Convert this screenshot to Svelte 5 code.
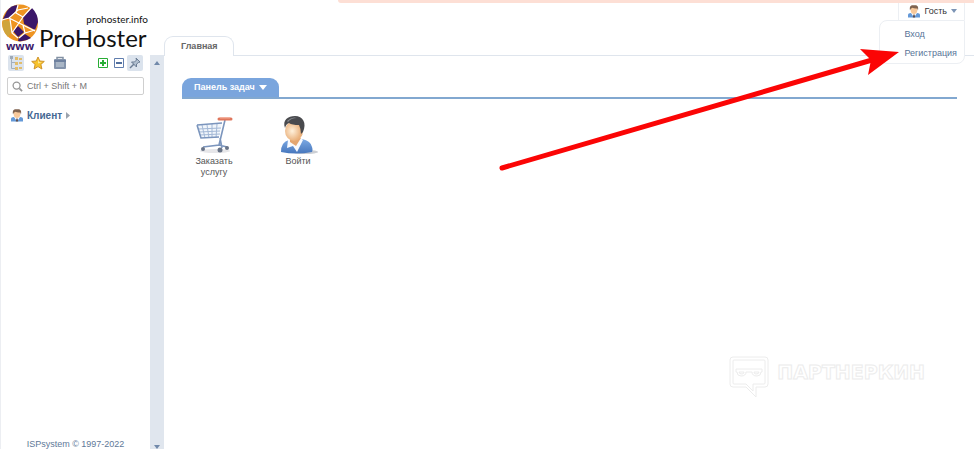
<script lang="ts">
let search = "";

const userLinks = ["Вход", "Регистрация"];
</script>

{#snippet person()}
  <svg class="person" viewBox="0 0 12 13" aria-hidden="true">
    <path d="M0 12.500V10q0-2 3-2h6q3 0 3 2v2.500z" fill="#6499d8" />
    <path d="M3 8 6 12.500 9 8z" fill="#fff" />
    <path d="M5.400 9.500h1.200l.6 3H4.800z" fill="#5b4a4a" />
    <ellipse cx="6" cy="5" rx="3.300" ry="4" fill="#f8c99b" />
    <path d="M2 5.500C1 0 4 .2 6 .2s5-.2 4 5.300L9.300 3.500Q6 3.800 4.500 2.800L2.800 3.800z" fill="#80634f" />
  </svg>
{/snippet}

<div class="page">
  <aside>
    <a class="logo" href="#home">
      <span class="globe">
        <svg viewBox="0 0 38 38" aria-hidden="true">
          <ellipse cx="19" cy="19" rx="18" ry="18.500" fill="#ee9421" />
          <path d="M6 7Q10 1 17 1L14 8 8 14 2 15z" fill="#3b1769" />
          <path d="M22 13 31 4Q37 10 37 18L34 26 23 20z" fill="#3b1769" />
          <path d="M18 33 24 30 30 34Q24 38 17 37z" fill="#3b1769" />
          <path d="M2 16 9 17 11 27 7 33Q0 26 2 16z" fill="#cfa43c" />
          <path d="M12 27 17 22 23 28 17 33z" fill="#3b1769" />
          <path d="M1 16 8 14 17 6 27 4M17 1 15 9 22 13 31 3M9 15 11 29 17 34M8 14 22 21 34 27M22 13 11 29M22 21 24 29 18 34M24 29 34 26" fill="none" stroke="#fff" stroke-width="1.200" />
        </svg>
        <b>www</b>
      </span>
      <span class="brand">
        <small>prohoster.info</small>
        <strong>ProHoster</strong>
      </span>
    </a>
    <div class="side-body">
      <div class="side-main">
        <div class="tools">
          <button class="active" aria-label="Меню">
            <svg viewBox="0 0 16 16">
              <path d="M3.500 3v10.500h4M3.500 7.500h4" fill="none" stroke="#a3afbd" />
              <path d="M7 2h3v3H7zM11 3h3v2h-3zM7 7h3v3H7zM11 7h3v2h-3zM7 12h3v3H7zM11 12h3v2h-3z" fill="#e2bd6c" />
              <path d="M2 1h3v3H2z" fill="#9eaab7" />
            </svg>
          </button>
          <button aria-label="Избранное">
            <svg viewBox="0 0 16 16">
              <path d="m8 2 1.800 4 4.500.4-3.400 3 1 4.600L8 11.600 4.100 14l1-4.600-3.400-3L6.200 6z" fill="#f7c32c" stroke="#cf932b" />
              <path d="m8 4 1 3 3 .3-4 1.200z" fill="#ffe994" />
            </svg>
          </button>
          <button class="last" aria-label="Корзина">
            <svg viewBox="0 0 16 16">
              <path d="M5 4.500V2.500h6v2" fill="none" stroke="#8391a3" stroke-width="1.500" />
              <rect x="2" y="4" width="12" height="10" rx="1" fill="#8494ac" />
              <path d="M4 7h8v5H4z" fill="#a9b6c6" />
              <path d="M2 5h12v2H2z" fill="#6e819f" />
            </svg>
          </button>
          <button aria-label="Развернуть">
            <svg viewBox="0 0 16 16">
              <path d="M3.500 3.500h9v9h-9z" fill="#fff" stroke="#28ad35" />
              <path d="M8 5v6M5 8h6" stroke="#28ad35" stroke-width="2" />
            </svg>
          </button>
          <button aria-label="Свернуть">
            <svg viewBox="0 0 16 16">
              <path d="M3.500 3.500h9v9h-9z" fill="#fff" stroke="#617eae" />
              <path d="M5 8h6" stroke="#516f9e" stroke-width="2" />
            </svg>
          </button>
          <button class="active" aria-label="Закрепить">
            <svg viewBox="0 0 16 16">
              <path d="m9 3 4 4-1.500.5L9.500 9v3L4.500 7h3l2-2z" fill="#b2c0d0" stroke="#6b7d94" />
              <path d="m7 9-4 4" stroke="#6b7d94" stroke-width="1.500" />
            </svg>
          </button>
        </div>
        <label class="search">
          <svg viewBox="0 0 12 12" aria-hidden="true">
            <circle cx="5" cy="5" r="3.800" fill="none" stroke="#969696" stroke-width="1.400" />
            <path d="m8 8 3 3" stroke="#969696" stroke-width="1.800" />
          </svg>
          <input type="text" bind:value={search} placeholder="Ctrl + Shift + M" aria-label="Поиск" />
        </label>
        <nav>
          <a href="#client">
            {@render person()}
            Клиент
            <svg class="chevron" viewBox="0 0 4 7" aria-hidden="true"><path d="m0 0 4 3.500L0 7z" fill="#9ba3ae" /></svg>
          </a>
        </nav>
        <footer>ISPsystem © 1997-2022</footer>
      </div>
      <div class="rail">
        <svg viewBox="0 0 6 4" aria-hidden="true"><path d="m0 4 3-4 3 4z" fill="#7189aa" /></svg>
        <svg viewBox="0 0 6 4" aria-hidden="true"><path d="m0 0 3 4 3-4z" fill="#7189aa" /></svg>
      </div>
    </div>
  </aside>

  <main>
    <header>
      <a class="tab" href="#main">Главная</a>
    </header>
    <section>
      <div class="section-head">
        <button>
          Панель задач
          <svg viewBox="0 0 8 5" aria-hidden="true"><path d="M0 0h8L4 5z" fill="#fff" /></svg>
        </button>
      </div>
      <div class="tasks">
        <a href="#order">
          <svg viewBox="0 0 40 40" aria-hidden="true">
            <ellipse cx="21" cy="37" rx="15" ry="2" fill="#e6e6e9" />
            <path d="M3 11 28 9 25 23 8 24z" fill="#f0f5fb" />
            <path d="M4 15l23-1M5 18l21-1M6 21l20-1M8 11l3 13M13 11l2 13M18 10v14M23 10l-1 14" fill="none" stroke="#a3b8d6" />
            <path d="M3 11 7 24 25 23M3 11 28 9M31 6 25 31 9 33M26 24 28 34M25 31l8 2" fill="none" stroke="#7b95bd" stroke-width="1.600" />
            <path d="M25 5h12" stroke="#df765c" stroke-width="3" stroke-linecap="round" />
            <path d="M26 4h10" stroke="#f5a78f" />
            <g fill="#697487"><circle cx="9" cy="35" r="2" /><circle cx="26" cy="36" r="2.500" /><circle cx="33" cy="34" r="2" /></g>
          </svg>
          Заказать услугу
        </a>
        <a href="#login">
          <svg viewBox="0 0 40 40" aria-hidden="true">
            <defs>
              <linearGradient id="shirt" x2="0" y2="1"><stop stop-color="#7caae4" /><stop offset="1" stop-color="#4777bd" /></linearGradient>
              <radialGradient id="face" cx=".4" cy=".5"><stop stop-color="#fff1dc" /><stop offset="1" stop-color="#eab17c" /></radialGradient>
            </defs>
            <ellipse cx="27" cy="38" rx="13" ry="2" fill="#cccfd4" />
            <path d="M3 38Q3 28 11 26l13-1q9 2 10 8 1 3 0 5-16 3-31 0z" fill="url(#shirt)" />
            <path d="M10 26 22 23 25 26 19 38 15 32 9 34z" fill="#f7faff" />
            <path d="M12 23v5l6 4 5-8z" fill="#e3a672" />
            <ellipse cx="16" cy="17" rx="9" ry="10" fill="url(#face)" />
            <path d="M7 14C4 6 10 2 17 2c8 0 12 7 8 16l-2 2q0-5-2-9-7 0-10-2-3 1-4 5z" fill="#494a4e" />
            <path d="M9 7q5-5 10-3-6 0-9 4z" fill="#888b91" />
          </svg>
          Войти
        </a>
      </div>
    </section>
  </main>

  <div class="notice"></div>

  <div class="user">
    <button>
      {@render person()}
      Гость
      <svg class="caret" viewBox="0 0 6 4" aria-hidden="true"><path d="M0 0h6L3 4z" fill="#7c94b5" /></svg>
    </button>
    <div class="user-menu">
      {#each userLinks as link}
        <a href="#user">{link}</a>
      {/each}
    </div>
  </div>

  <svg class="arrow" viewBox="0 0 410 130" aria-hidden="true">
    <path d="M12 123 382 15" stroke="#fb0505" stroke-width="5" stroke-linecap="round" />
    <path d="m409 7-39-3 11 11-3 15z" fill="#fb0505" />
  </svg>

  <div class="watermark">
    <svg viewBox="0 0 40 42" aria-hidden="true">
      <g fill="none" stroke="#ececec">
        <path d="M4 1h32q3 0 3 3v24q0 3-3 3H27v10l-10-10H4q-3 0-3-3V4q0-3 3-3z" />
        <path d="M5 4h30q1 0 1 1v22q0 1-1 1H24v7l-7-7H5q-1 0-1-1V5q0-1 1-1z" />
        <path d="M7 13h26v3h-1q0 4-4 4-5 0-5-4h-6q0 4-5 4-4 0-4-4H7zM10 16h5q0 2-2 2-3 0-3-2zM25 16h5q0 2-3 2-2 0-2-2z" />
      </g>
    </svg>
    <span>ПАРТНЕРКИН</span>
  </div>
</div>

<style>
  :global(body) {
    margin: 0;
    background: #fff;
    font-family: "Liberation Sans", Arial, sans-serif;
    font-size: 9px;
  }
  a {
    text-decoration: none;
  }
  button {
    font: inherit;
    border: 0;
    padding: 0;
    background: none;
    cursor: pointer;
  }
  .page {
    position: relative;
    display: flex;
    min-height: 100vh;
    overflow: hidden;
  }
  aside {
    display: flex;
    flex-direction: column;
    width: 164px;
    flex: none;
    border-left: 1px solid #eceef2;
    box-sizing: border-box;
  }
  .logo {
    display: flex;
    height: 55px;
    color: #111;
    font-family: Lato, sans-serif;
  }
  .globe {
    display: flex;
    flex-direction: column;
    align-items: center;
    width: 38px;
    padding-top: 4px;
  }
  .globe svg {
    width: 38px;
    height: 38px;
  }
  .globe b {
    color: #3b1769;
    font: bold 11px/8px "Open Sans", sans-serif;
  }
  .brand {
    display: flex;
    flex-direction: column;
    width: 109px;
    padding-top: 13px;
  }
  .brand small {
    align-self: flex-end;
    font-size: 10px;
    line-height: 12px;
  }
  .brand strong {
    font-size: 24px;
    font-weight: 400;
    line-height: 26px;
  }
  .side-body {
    display: flex;
    flex: 1;
  }
  .side-main {
    display: flex;
    flex-direction: column;
    flex: 1;
    min-width: 0;
    padding: 0 6px;
  }
  .tools {
    display: flex;
    padding: 0 1px;
  }
  .tools button {
    width: 16px;
    height: 16px;
    flex: none;
    border-radius: 2px;
    margin-right: 6px;
  }
  .tools button:nth-child(n+4) {
    margin-right: 0;
  }
  .tools .last {
    margin-right: auto;
  }
  .tools svg {
    display: block;
    width: 16px;
    height: 16px;
  }
  .tools .active {
    background: #dbe3ed;
  }
  .search {
    display: flex;
    align-items: center;
    gap: 4px;
    height: 18px;
    box-sizing: border-box;
    border: 1px solid #cfcfcf;
    border-radius: 2px;
    margin-top: 6px;
    padding: 0 4px;
  }
  .search svg {
    width: 11px;
    height: 11px;
    flex: none;
  }
  .search input {
    flex: 1;
    min-width: 0;
    border: 0;
    padding: 0;
    outline: 0;
    font: inherit;
    color: #666;
  }
  .search input::placeholder {
    color: #777;
  }
  nav {
    padding: 14px 4px;
  }
  nav a {
    display: flex;
    align-items: center;
    gap: 4px;
    color: #456893;
    font-size: 10px;
    font-weight: bold;
  }
  .person {
    width: 12px;
    height: 13px;
  }
  .chevron {
    width: 4px;
    height: 7px;
  }
  footer {
    margin-top: auto;
    color: #617998;
    text-align: center;
  }
  .rail {
    display: flex;
    flex: none;
    flex-direction: column;
    align-items: center;
    justify-content: space-between;
    width: 14px;
    padding-top: 6px;
    box-sizing: border-box;
    background: #e0e6ee;
  }
  .rail svg {
    width: 6px;
    height: 4px;
  }
  main {
    flex: 1;
    min-width: 0;
  }
  header {
    display: flex;
    align-items: flex-end;
    height: 56px;
    box-sizing: border-box;
    border-bottom: 1px solid #dfe5ed;
  }
  .tab {
    height: 20px;
    box-sizing: border-box;
    border: 1px solid #dfe5ed;
    border-bottom: 0;
    border-radius: 9px 9px 0 0;
    margin-bottom: -1px;
    padding: 4px 15px 0 16px;
    background: #fff;
    color: #666;
    font-weight: bold;
  }
  section {
    padding: 22px 17px 0 18px;
  }
  .section-head {
    display: flex;
    border-bottom: 2px solid #82a8d0;
  }
  .section-head button {
    display: flex;
    align-items: center;
    gap: 4px;
    height: 19px;
    border-radius: 9px 9px 0 0;
    padding: 0 12px 1px;
    background: #7aa5dd;
    color: #fff;
    font-weight: bold;
  }
  .section-head svg {
    width: 8px;
    height: 5px;
  }
  .tasks {
    display: flex;
    gap: 20px;
    padding-top: 15px;
  }
  .tasks a {
    display: flex;
    flex-direction: column;
    align-items: center;
    width: 64px;
    color: #555;
    line-height: 11px;
    text-align: center;
  }
  .tasks svg {
    width: 40px;
    height: 40px;
    margin-bottom: 2px;
  }
  .notice {
    position: absolute;
    top: 0;
    left: 338px;
    right: 0;
    height: 3px;
    border-radius: 0 0 0 4px;
    background: #fddfd5;
  }
  .user {
    position: absolute;
    top: 3px;
    right: 9px;
    display: flex;
    flex-direction: column;
    align-items: flex-end;
  }
  .user button {
    display: flex;
    align-items: center;
    gap: 4px;
    height: 17px;
    box-sizing: border-box;
    border: solid #eceff3;
    border-width: 0 1px;
    padding: 0 7px 1px 9px;
    background: #fff;
    color: #333;
  }
  .caret {
    width: 6px;
    height: 4px;
  }
  .user-menu {
    display: flex;
    flex-direction: column;
    gap: 9px;
    border: 1px solid #eceff3;
    border-radius: 8px 0 8px 8px;
    padding: 8px 7px 5px 24px;
    background: #fff;
  }
  .user-menu a {
    color: #587498;
    line-height: 10px;
  }
  .arrow {
    position: absolute;
    top: 45px;
    right: 74px;
    width: 410px;
    height: 130px;
  }
  .watermark {
    position: absolute;
    right: 49px;
    bottom: 51px;
    display: flex;
    gap: 8px;
  }
  .watermark svg {
    width: 40px;
    height: 42px;
  }
  .watermark span {
    color: #fff;
    font: bold 19px/32px "DejaVu Sans", sans-serif;
    -webkit-text-stroke: 1px #ececec;
  }
</style>
